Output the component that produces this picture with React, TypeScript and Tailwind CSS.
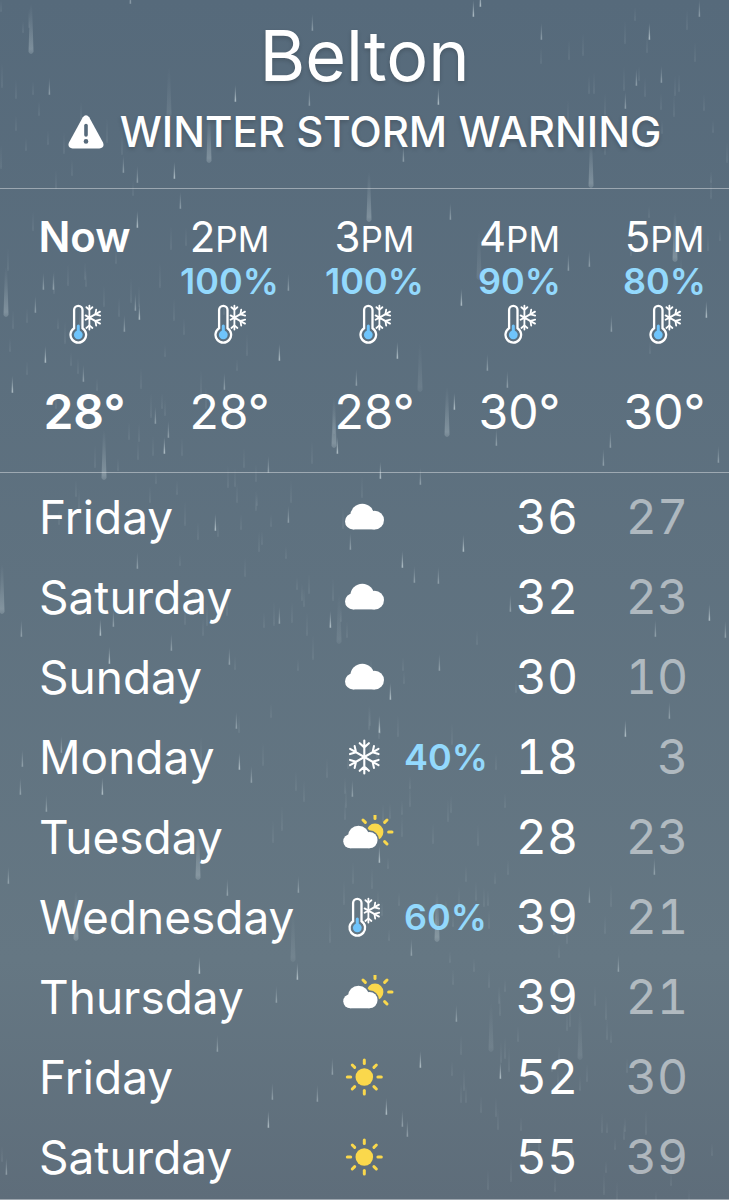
import React from 'react';

type Sky = 'cloud' | 'snow' | 'partly' | 'wintry' | 'sun';

interface Hour {
  hour: string;
  period?: string;
  chance?: string;
  temp: string;
}

interface Day {
  name: string;
  sky: Sky;
  chance?: string;
  high: number;
  low: number;
}

const HOURS: Hour[] = [
  { hour: 'Now', temp: '28°' },
  { hour: '2', period: 'PM', chance: '100%', temp: '28°' },
  { hour: '3', period: 'PM', chance: '100%', temp: '28°' },
  { hour: '4', period: 'PM', chance: '90%', temp: '30°' },
  { hour: '5', period: 'PM', chance: '80%', temp: '30°' },
];

const DAYS: Day[] = [
  { name: 'Friday', sky: 'cloud', high: 36, low: 27 },
  { name: 'Saturday', sky: 'cloud', high: 32, low: 23 },
  { name: 'Sunday', sky: 'cloud', high: 30, low: 10 },
  { name: 'Monday', sky: 'snow', chance: '40%', high: 18, low: 3 },
  { name: 'Tuesday', sky: 'partly', high: 28, low: 23 },
  { name: 'Wednesday', sky: 'wintry', chance: '60%', high: 39, low: 21 },
  { name: 'Thursday', sky: 'partly', high: 39, low: 21 },
  { name: 'Friday', sky: 'sun', high: 52, low: 30 },
  { name: 'Saturday', sky: 'sun', high: 55, low: 39 },
];

// [x, y of the tip]
const THICK_DROPS = [
  [31, 54], [209, 163], [169, 117], [591, 188], [6, 317], [104, 480], [334, 448],
  [447, 437], [420, 392], [675, 262], [369, 222], [479, 280], [2, 614], [339, 644],
  [198, 880], [76, 941], [293, 962], [437, 942], [491, 1052], [580, 1060],
];
// drops that are out of focus
const DIM_DROPS = [169, 479, 339, 420, 293, 491, 580];

const THIN_DROPS = [
  [473, 17], [699, 17], [541, 40], [649, 40], [661, 83], [625, 109], [174, 179], [130, 4],
  [49, 95], [438, 105], [403, 162], [636, 86], [235, 102], [137, 183], [312, 31], [480, 7],
  [123, 173], [309, 106], [137, 228], [43, 290], [53, 290], [139, 320], [135, 311], [35, 313],
  [279, 361], [83, 382], [224, 390], [12, 393], [155, 424], [168, 438], [164, 454], [356, 386],
  [268, 473], [45, 363], [288, 291], [180, 209], [337, 454], [124, 332], [450, 220], [397, 359],
  [507, 388], [487, 371], [461, 306], [568, 271], [589, 267], [706, 318], [603, 466], [610, 448],
  [380, 479], [420, 485], [718, 463], [454, 410], [611, 332], [496, 446], [215, 531], [288, 523],
  [350, 550], [463, 552], [414, 583], [137, 569], [402, 568], [438, 584], [21, 637], [100, 636],
  [113, 627], [171, 651], [109, 664], [229, 665], [279, 624], [330, 628], [439, 671], [655, 637],
  [709, 621], [510, 612], [725, 638], [390, 700], [236, 729], [669, 719], [625, 737], [22, 767],
  [61, 753], [239, 770], [251, 783], [20, 795], [102, 795], [46, 812], [352, 797], [379, 733],
  [227, 896], [298, 893], [199, 974], [411, 956], [276, 1003], [297, 980], [618, 972], [456, 1022],
  [500, 1079], [217, 1052], [332, 1075], [268, 1128], [272, 1100], [317, 1102], [386, 1115],
  [402, 1127], [407, 1137], [420, 1068], [6, 1175], [654, 875], [379, 863], [589, 903], [8, 884],
];

// faint far-away drizzle, spread by a small fixed generator
const FAINT_DROPS = Array.from({ length: 260 }, (_, i) => ({
  x: (i * 283 + ((i * i * 7) % 131)) % 729,
  y: (i * 467 + ((i * i * 13) % 197)) % 1200,
  h: 12 + ((i * 11) % 14),
}));

const Rain: React.FC = () => (
  <svg className="absolute inset-0 h-full w-full" aria-hidden="true">
    <defs>
      <linearGradient id="drop" x1="0" y1="0" x2="0" y2="1">
        <stop offset="0" stopColor="#c9d8de" stopOpacity="0" />
        <stop offset="0.9" stopColor="#d5e2e6" />
        <stop offset="1" stopColor="#d5e2e6" stopOpacity="0.6" />
      </linearGradient>
    </defs>
    {FAINT_DROPS.map((d, i) => (
      <rect key={i} x={d.x} y={d.y} width="2" height={d.h} fill="url(#drop)" opacity="0.08" />
    ))}
    {THICK_DROPS.map(([x, y], i) => (
      <path
        key={i}
        d={`M${x - 1} ${y - 50}h2l1.5 48q-2.5 4 -5 0z`}
        fill="url(#drop)"
        opacity={DIM_DROPS.includes(x) ? 0.12 : 0.3}
      />
    ))}
    {THIN_DROPS.map(([x, y], i) => (
      <path key={i} d={`M${x} ${y - 17}h.8l.4 17h-1.6z`} fill="url(#drop)" opacity={i % 3 ? 0.4 : 0.65} />
    ))}
  </svg>
);

const Thermometer: React.FC = () => (
  <g fill="none" stroke="#fff" strokeWidth="2.3" strokeLinecap="round">
    <path d="M5.1 24.2V6a4.2 4.2 0 0 1 8.4 0v18.2a7.8 7.8 0 1 1 -8.4 0z" />
    <path d="M9.3 22v8" stroke="#6fc4fb" strokeWidth="3" />
    <circle cx="9.3" cy="30.8" r="4.4" fill="#6fc4fb" stroke="none" />
    <g strokeWidth="1.8">
      <path d="M20.4 1.6v24M20.4 13.6l10.6 -6M20.4 13.6l10.6 6M20.4 13.6l-3.8 -2.2M20.4 13.6l-3.8 2.2" />
      <path d="M17.4 3.2l3 2.6l3 -2.6M17.4 24l3 -2.6l3 2.6" />
      <path d="M27.2 5.6l-.8 4.8l4.8 1.2M31.2 15.6l-4.8 1.2l.8 4.8" />
    </g>
  </g>
);

const CloudShape: React.FC = () => (
  <>
    <circle cx="17.6" cy="12.4" r="12" />
    <circle cx="8.3" cy="18" r="8" />
    <circle cx="30" cy="16.7" r="9.3" />
    <path d="M8.3 14H30V26H8.3z" />
  </>
);

const Rays: React.FC<{ angles: number[] }> = ({ angles }) => (
  <g stroke="#fad84c" strokeWidth="3" strokeLinecap="round">
    {angles.map((a) => (
      <path key={a} d="M0 -13.6v-3.4" transform={`rotate(${a})`} />
    ))}
  </g>
);

// every daily icon shares one 60x44 canvas so the column stays centred
const SkyIcon: React.FC<{ sky: Sky }> = ({ sky }) => (
  <svg className="block h-[44px] w-[60px]" viewBox="0 0 60 44" role="img" aria-label={sky}>
    {sky === 'cloud' && (
      <g transform="translate(10.7 8.4)" fill="#fff">
        <CloudShape />
      </g>
    )}
    {sky === 'wintry' && (
      <g transform="translate(14 2)">
        <Thermometer />
      </g>
    )}
    {sky === 'snow' && (
      <g transform="translate(30.3 22)" fill="none" stroke="#fff" strokeWidth="2.1" strokeLinecap="round" strokeLinejoin="round">
        {[0, 60, 120, 180, 240, 300].map((a) => (
          <path key={a} d="M0 0v-16.4M-4.6 -13.8l4.6 4.2l4.6 -4.2" transform={`rotate(${a})`} />
        ))}
      </g>
    )}
    {sky === 'sun' && (
      <g transform="translate(30.3 22)">
        <circle r="8.8" fill="#fad84c" />
        <Rays angles={[0, 45, 90, 135, 180, 225, 270, 315]} />
      </g>
    )}
    {sky === 'partly' && (
      <>
        <defs>
          <mask id="behind-cloud">
            <rect width="60" height="44" fill="#fff" />
            <g transform="translate(9 10.4) scale(.88)" stroke="#000" strokeWidth="3.6">
              <CloudShape />
            </g>
          </mask>
        </defs>
        <g mask="url(#behind-cloud)">
          <circle cx="41" cy="17" r="8.4" fill="#fad84c" />
        </g>
        <g transform="translate(41 17)">
          <Rays angles={[-45, 0, 45, 90, 135]} />
        </g>
        <g transform="translate(9 10.4) scale(.88)" fill="#fff">
          <CloudShape />
        </g>
      </>
    )}
  </svg>
);

const App: React.FC = () => (
  <main className="relative min-h-screen overflow-hidden bg-linear-to-b from-[#566a7b] via-[#657783] via-80% to-[#5e6d7a] font-['Inter','Liberation_Sans',sans-serif] text-white">
    <Rain />

    <div className="relative">
      <header className="border-b border-white/40 px-4 pt-5 pb-8 text-center [text-shadow:0_2px_4px_rgba(0,0,0,0.18)]">
        <h1 className="text-[70px] leading-[72px]">Belton</h1>
        <p className="mt-4 flex items-center justify-center gap-4 text-[42px] leading-[48px] font-medium whitespace-nowrap">
          <svg className="h-[34px] w-[36px] shrink-0" viewBox="0 0 36 34" aria-hidden="true">
            <path
              d="M14.8 2.2Q18 -1.6 21.2 2.2L35 27.6Q37 33 31.4 33.4H4.6Q-1 33 1 27.6z"
              fill="#fff"
            />
            <path d="M18 10.5v9.5" stroke="#566a7b" strokeWidth="3.6" strokeLinecap="round" />
            <circle cx="18" cy="26.4" r="2.3" fill="#566a7b" />
          </svg>
          WINTER STORM WARNING
        </p>
      </header>

      <section className="flex overflow-hidden border-b border-white/40 pt-6 pb-[31px] pl-3">
        {HOURS.map((h) => (
          <div
            key={h.hour}
            className={`flex w-[145px] shrink-0 flex-col items-center ${h.period ? '' : 'font-semibold'}`}
          >
            <div className="text-[42px] leading-[48px]">
              {h.hour}
              {h.period && <span className="text-[35px] leading-none">{h.period}</span>}
            </div>
            <div className="h-10 text-[36px] leading-10 font-semibold text-[#93d9fd]">{h.chance}</div>
            <div className="flex h-[46px] items-center">
              <svg className="h-[40px] w-[32px]" viewBox="0 0 32 40" role="img" aria-label="wintry">
                <Thermometer />
              </svg>
            </div>
            <div className="mt-9 text-[48px] leading-[58px]">{h.temp}</div>
          </div>
        ))}
      </section>

      <div className="border-b border-white/40 pt-1 pr-[41px] pb-0.5 pl-[39px]">
        <table className="w-full table-fixed text-[48px]">
          <tbody>
            {DAYS.map((d, i) => (
              <tr key={i} className="h-20">
                <th scope="row" className="p-0 text-left text-[46px] font-normal">{d.name}</th>
                <td className="w-[60px] p-0"><SkyIcon sky={d.sky} /></td>
                <td className="w-[92px] p-0 pl-2.5 text-[36px] font-semibold text-[#93d9fd]">{d.chance}</td>
                <td className="w-[92px] p-0 text-right tabular-nums">{d.high}</td>
                <td className="w-[110px] p-0 text-right text-white/50 tabular-nums">{d.low}</td>
              </tr>
            ))}
          </tbody>
        </table>
      </div>
    </div>
  </main>
);

export default App;
